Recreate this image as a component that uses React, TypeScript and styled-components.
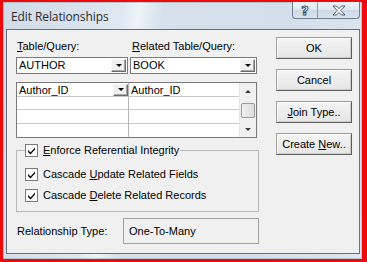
import React from "react";
import styled, { createGlobalStyle } from "styled-components";

const Global = createGlobalStyle`
  html, body { margin: 0; padding: 0; }
  body { background: #ec0a0a; font-family: "Liberation Sans", Arial, sans-serif; }
`;

const Page = styled.div`
  width: 367px;
  height: 262px;
  box-sizing: border-box;
  padding: 2px 5px 3px 3px;
  background: #ec0a0a;
`;

const Window = styled.div`
  height: 100%;
  box-sizing: border-box;
  display: flex;
  flex-direction: column;
  padding: 0 2px 5px 3px;
  background: linear-gradient(100deg, #cfdbe7 0%, #dfe8f1 30%, #eef3f8 34%, #d6e1ec 40%, #d3dfeb 70%, #dde7f1 100%);
  box-shadow: inset 0 0 0 1px rgba(120, 135, 150, 0.35);
`;

const TitleBar = styled.div`
  height: 27px;
  display: flex;
  align-items: flex-start;
`;

const Title = styled.div`
  flex: 1;
  padding: 6px 0 0 5px;
  font-size: 12px;
  color: #2b2b2b;
  font-family: "Open Sans", "Liberation Sans", sans-serif;
  letter-spacing: -0.1px;
`;

const Caps = styled.div`
  display: flex;
  height: 16px;
  border: 1px solid #6f7e8e;
  border-top: none;
  border-radius: 0 0 4px 4px;
  overflow: hidden;
  background: linear-gradient(#eef3f8, #dde6ef 50%, #cdd9e5 51%, #d9e4ef);
`;

const CapBtn = styled.div<{ $w: number }>`
  width: ${(p) => p.$w}px;
  display: flex;
  align-items: center;
  justify-content: center;
  & + & { border-left: 1px solid #8d9aa8; }
`;

const HelpGlyph = styled.span`
  font-family: "DejaVu Sans", sans-serif;
  font-size: 13px;
  font-weight: bold;
  color: #ffffff;
  -webkit-text-stroke: 1px #3a4d62;
  line-height: 1;
`;

const Client = styled.div`
  flex: 1;
  background: #f0f0f0;
  border: 1px solid #6a6f76;
  display: flex;
  padding: 7px 0 0 9px;
  font-size: 11px;
  color: #000;
`;

const LeftCol = styled.div`
  width: 243px;
  display: flex;
  flex-direction: column;
`;

const LabelRow = styled.div`
  display: flex;
  height: 18px;
  align-items: flex-start;
  padding-top: 3px;
  box-sizing: border-box;
`;

const Label = styled.div<{ $w: number }>`
  width: ${(p) => p.$w}px;
  padding-left: 1px;
  line-height: 13px;
`;

const U = styled.span`
  text-decoration: underline;
`;

const ComboRow = styled.div`
  display: flex;
  gap: 2px;
  height: 17px;
  margin-top: 2px;
`;

const Combo = styled.div<{ $w: number }>`
  width: ${(p) => p.$w}px;
  box-sizing: border-box;
  border: 1px solid #7a7a7a;
  background: #fff;
  display: flex;
  align-items: center;
  padding: 0 1px 0 2px;
`;

const ComboText = styled.div`
  flex: 1;
  line-height: 13px;
`;

const DropBtn = styled.div<{ $h: number }>`
  width: 15px;
  height: ${(p) => p.$h}px;
  box-sizing: border-box;
  background: #f0f0f0;
  border: 1px solid;
  border-color: #f6f6f6 #6c6c6c #6c6c6c #f6f6f6;
  box-shadow: inset -1px -1px 0 #a8a8a8;
  display: flex;
  align-items: center;
  justify-content: center;
`;

const Tri = styled.div`
  width: 0;
  height: 0;
  border-left: 3px solid transparent;
  border-right: 3px solid transparent;
  border-top: 3px solid #000;
`;

const Grid = styled.div`
  margin-top: 8px;
  width: 241px;
  height: 56px;
  box-sizing: border-box;
  border: 1px solid #7a7a7a;
  background: #fff;
  display: flex;
`;

const Cells = styled.div`
  flex: 1;
  display: grid;
  grid-template-columns: 112px 1fr;
  grid-template-rows: 14px 13px 14px 13px;
`;

const Cell = styled.div<{ $last?: boolean; $left?: boolean }>`
  box-sizing: border-box;
  border-bottom: ${(p) => (p.$last ? "none" : "1px solid #c8c8c8")};
  border-right: ${(p) => (p.$left ? "1px solid #b4b4b4" : "none")};
  display: flex;
  align-items: center;
  padding-left: 2px;
  line-height: 12px;
`;

const CellText = styled.div`
  flex: 1;
`;

const Scroll = styled.div`
  width: 16px;
  display: flex;
  flex-direction: column;
  background: #f0f0f0;
  border-left: 1px solid #e4e4e4;
`;

const ScrollArrow = styled.div`
  height: 16px;
  display: flex;
  align-items: center;
  justify-content: center;
`;

const ScrollTrack = styled.div`
  flex: 1;
  display: flex;
  flex-direction: column;
  justify-content: center;
  padding: 0 1px;
`;

const Thumb = styled.div`
  height: 15px;
  box-sizing: border-box;
  border: 1px solid #9a9a9a;
  border-radius: 2px;
  background: linear-gradient(90deg, #f2f2f2, #dcdcdc);
`;

const TriUp = styled.div`
  width: 0;
  height: 0;
  border-left: 3px solid transparent;
  border-right: 3px solid transparent;
  border-bottom: 3px solid #3c3c3c;
`;

const TriDown = styled(TriUp)`
  border-bottom: none;
  border-top: 3px solid #3c3c3c;
`;

const Group = styled.fieldset`
  margin: 6px 0 0 0;
  padding: 0 0 0 8px;
  width: 243px;
  height: 68px;
  box-sizing: border-box;
  border: 1px solid #b9b9b9;
  border-radius: 0;
  display: flex;
  flex-direction: column;
`;

const Legend = styled.legend`
  padding: 0 1px 0 0;
  margin-left: 0;
`;

const CheckLine = styled.label<{ $top?: number }>`
  display: flex;
  align-items: center;
  gap: 5px;
  height: 13px;
  margin-top: ${(p) => p.$top ?? 0}px;
  line-height: 13px;
`;

const Box = styled.span`
  width: 13px;
  height: 13px;
  box-sizing: border-box;
  border: 1px solid #7a7a7a;
  background: #fff;
  display: flex;
  align-items: center;
  justify-content: center;
`;

const RelRow = styled.div`
  margin-top: 6px;
  display: flex;
  align-items: center;
  height: 26px;
`;

const RelLabel = styled.div`
  width: 106px;
  padding-left: 1px;
`;

const RelBox = styled.div`
  flex: 1;
  height: 26px;
  box-sizing: border-box;
  border: 1px solid #a0a0a0;
  display: flex;
  align-items: center;
  padding-left: 5px;
`;

const RightCol = styled.div`
  margin-left: 17px;
  display: flex;
  flex-direction: column;
  gap: 10px;
`;

const Button = styled.div`
  width: 76px;
  height: 22px;
  box-sizing: border-box;
  border: 1px solid;
  border-color: #9c9c9c #5e5e5e #5e5e5e #9c9c9c;
  box-shadow: inset 1px 1px 0 #ffffff, inset -1px -1px 0 #c9c9c9;
  background: linear-gradient(#f4f4f4, #e6e6e6);
  display: flex;
  align-items: center;
  justify-content: center;
  font-size: 11px;
`;

const Check = () => (
  <Box>
    <svg width="9" height="9" viewBox="0 0 9 9">
      <path d="M1 4 L3.5 6.5 L8 1.5 L8 3.5 L3.5 8.5 L1 6 Z" fill="#000" />
    </svg>
  </Box>
);

export default function App() {
  return (
    <Page>
      <Global />
      <Window>
        <TitleBar>
          <Title>Edit Relationships</Title>
          <Caps>
            <CapBtn $w={24}>
              <HelpGlyph>?</HelpGlyph>
            </CapBtn>
            <CapBtn $w={41}>
              <svg width="14" height="11" viewBox="0 0 14 11">
                <path
                  d="M1 1 H4.5 L7 3.6 L9.5 1 H13 L8.8 5.5 L13 10 H9.5 L7 7.4 L4.5 10 H1 L5.2 5.5 Z"
                  fill="#ffffff"
                  stroke="#3a4d62"
                  strokeWidth="0.9"
                  strokeLinejoin="round"
                />
              </svg>
            </CapBtn>
          </Caps>
        </TitleBar>
        <Client>
          <LeftCol>
            <LabelRow>
              <Label $w={114}>
                <U>T</U>able/Query:
              </Label>
              <Label $w={126}>
                <U>R</U>elated Table/Query:
              </Label>
            </LabelRow>
            <ComboRow>
              <Combo $w={112}>
                <ComboText>AUTHOR</ComboText>
                <DropBtn $h={13}>
                  <Tri />
                </DropBtn>
              </Combo>
              <Combo $w={127}>
                <ComboText>BOOK</ComboText>
                <DropBtn $h={13}>
                  <Tri />
                </DropBtn>
              </Combo>
            </ComboRow>
            <Grid>
              <Cells>
                <Cell $left>
                  <CellText>Author_ID</CellText>
                  <DropBtn $h={12}>
                    <Tri />
                  </DropBtn>
                </Cell>
                <Cell>
                  <CellText>Author_ID</CellText>
                </Cell>
                <Cell $left />
                <Cell />
                <Cell $left />
                <Cell />
                <Cell $left $last />
                <Cell $last />
              </Cells>
              <Scroll>
                <ScrollArrow>
                  <TriUp />
                </ScrollArrow>
                <ScrollTrack>
                  <Thumb />
                </ScrollTrack>
                <ScrollArrow>
                  <TriDown />
                </ScrollArrow>
              </Scroll>
            </Grid>
            <Group>
              <Legend>
                <CheckLine>
                  <Check />
                  <span>
                    <U>E</U>nforce Referential Integrity
                  </span>
                </CheckLine>
              </Legend>
              <CheckLine $top={11}>
                <Check />
                <span>
                  Cascade <U>U</U>pdate Related Fields
                </span>
              </CheckLine>
              <CheckLine $top={8}>
                <Check />
                <span>
                  Cascade <U>D</U>elete Related Records
                </span>
              </CheckLine>
            </Group>
            <RelRow>
              <RelLabel>Relationship Type:</RelLabel>
              <RelBox>One-To-Many</RelBox>
            </RelRow>
          </LeftCol>
          <RightCol>
            <Button>OK</Button>
            <Button>Cancel</Button>
            <Button>
              <span>
                <U>J</U>oin Type..
              </span>
            </Button>
            <Button>
              <span>
                Create <U>N</U>ew..
              </span>
            </Button>
          </RightCol>
        </Client>
      </Window>
    </Page>
  );
}
